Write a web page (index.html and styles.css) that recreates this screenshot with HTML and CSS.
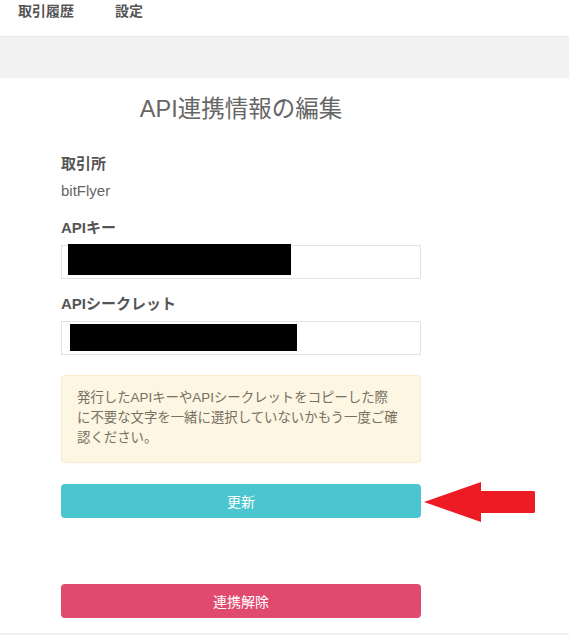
FILE: index.html
```html
<!DOCTYPE html>
<html lang="ja">
<head>
<meta charset="utf-8">
<title>API連携情報の編集</title>
<link rel="stylesheet" href="styles.css">
</head>
<body>
<nav class="topnav">
  <a class="nav-item" href="#">取引履歴</a>
  <a class="nav-item" href="#">設定</a>
</nav>
<div class="band"></div>
<main class="main">
  <div class="form">
    <h1 class="title">API連携情報の編集</h1>
    <div class="label label-first">取引所</div>
    <div class="value">bitFlyer</div>
    <div class="label">APIキー</div>
    <div class="input">
      <span class="redact redact-1"></span>
    </div>
    <div class="label label-2">APIシークレット</div>
    <div class="input">
      <span class="redact redact-2"></span>
    </div>
    <div class="alert">発行したAPIキーやAPIシークレットをコピーした際に不要な文字を一緒に選択していないかもう一度ご確認ください。</div>
    <button class="btn btn-update" type="button">更新</button>
    <button class="btn btn-delete" type="button">連携解除</button>
  </div>
  <svg class="arrow" width="112" height="42" viewBox="0 0 112 42">
    <polygon points="0,20 57,0 57,9 110,9 111,10 111,30 110,31 57,31 57,40" fill="#ed1c24"/>
  </svg>
</main>
</body>
</html>
```
FILE: styles.css
```css
* { box-sizing: border-box; }
html, body { margin: 0; padding: 0; }
body {
  background: #f2f2f2;
  font-family: "Liberation Sans", "Noto Sans CJK JP", sans-serif;
  color: #555;
}
.topnav {
  height: 37px;
  background: #fff;
  border-bottom: 1px solid #e6e6e6;
  display: flex;
  gap: 41px;
  padding: 1px 0 0 18px;
}
.nav-item {
  font-family: "Noto Sans CJK JP", sans-serif;
  font-size: 14px;
  font-weight: bold;
  line-height: 18px;
  color: #555;
  text-decoration: none;
}
.band { height: 41px; background: #f2f2f2; }
.main {
  position: relative;
  background: #fff;
  padding: 15px 0 14px 61px;
  height: 555px;
}
.form { width: 360px; display: flex; flex-direction: column; }
.title {
  margin: 0;
  font-size: 23.5px;
  font-weight: normal;
  line-height: 32px;
  text-align: center;
  color: #666;
}
.label {
  font-family: "Liberation Sans", "Noto Sans CJK JP", sans-serif;
  font-weight: bold;
  font-size: 15px;
  line-height: 20px;
  color: #555;
  margin-top: 17px;
}
.label-first { margin-top: 29px; }
.label-2 { margin-top: 15px; }
.value {
  font-size: 15px;
  line-height: 20px;
  color: #666;
  margin-top: 7px;
}
.input {
  position: relative;
  height: 34px;
  margin-top: 7px;
  border: 1px solid #e3e3e3;
  background: #fff;
}
.redact { position: absolute; background: #000; }
.redact-1 { left: 6px; top: -2px; width: 223px; height: 31px; }
.redact-2 { left: 8px; top: 2px; width: 227px; height: 27px; }
.alert {
  margin-top: 20px;
  height: 88px;
  padding: 12px 20px 14px 15px;
  background: #fcf6e3;
  border: 1px solid #f6ebcc;
  border-radius: 4px;
  font-family: "Liberation Sans", "Noto Sans CJK JP", sans-serif;
  font-size: 13.4px;
  line-height: 20px;
  color: #777062;
}
.btn {
  display: block;
  width: 100%;
  height: 34px;
  border: none;
  border-radius: 4px;
  color: #fff;
  font-family: "Noto Sans CJK JP", sans-serif;
  font-size: 14px;
  padding: 0;
  cursor: pointer;
}
.btn-update { margin-top: 21px; background: #4bc5cf; }
.btn-delete { margin-top: 66px; background: #e04a6e; }
.arrow { position: absolute; left: 424px; top: 404px; }
```
